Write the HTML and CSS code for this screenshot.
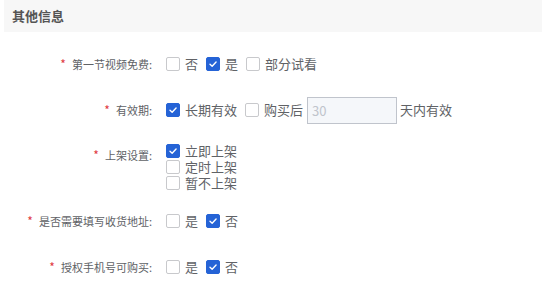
FILE: index.html
```html
<!DOCTYPE html>
<html lang="zh">
<head>
<meta charset="utf-8">
<link rel="stylesheet" href="styles.css">
</head>
<body>
<div class="page">
  <div class="section-head">其他信息</div>
  <form class="form">
    <div class="row r1">
      <label class="lbl"><span class="req">*</span>第一节视频免费:</label>
      <div class="ctl">
        <span class="opt"><span class="cb"></span><span class="txt">否</span></span>
        <span class="opt"><span class="cb on"><svg viewBox="0 0 14 14"><path d="M3.5 7.2 L6 9.6 L10.6 4.6" /></svg></span><span class="txt">是</span></span>
        <span class="opt"><span class="cb"></span><span class="txt">部分试看</span></span>
      </div>
    </div>
    <div class="row r2">
      <label class="lbl"><span class="req">*</span>有效期:</label>
      <div class="ctl">
        <span class="opt"><span class="cb on"><svg viewBox="0 0 14 14"><path d="M3.5 7.2 L6 9.6 L10.6 4.6" /></svg></span><span class="txt">长期有效</span></span>
        <span class="opt"><span class="cb"></span><span class="txt">购买后</span></span>
        <span class="inp">30</span>
        <span class="txt after">天内有效</span>
      </div>
    </div>
    <div class="row r3">
      <label class="lbl"><span class="req">*</span>上架设置:</label>
      <div class="ctl stack">
        <span class="opt"><span class="cb on"><svg viewBox="0 0 14 14"><path d="M3.5 7.2 L6 9.6 L10.6 4.6" /></svg></span><span class="txt">立即上架</span></span>
        <span class="opt"><span class="cb"></span><span class="txt">定时上架</span></span>
        <span class="opt"><span class="cb"></span><span class="txt">暂不上架</span></span>
      </div>
    </div>
    <div class="row r4">
      <label class="lbl"><span class="req">*</span>是否需要填写收货地址:</label>
      <div class="ctl">
        <span class="opt"><span class="cb"></span><span class="txt">是</span></span>
        <span class="opt"><span class="cb on"><svg viewBox="0 0 14 14"><path d="M3.5 7.2 L6 9.6 L10.6 4.6" /></svg></span><span class="txt">否</span></span>
      </div>
    </div>
    <div class="row r5">
      <label class="lbl"><span class="req">*</span>授权手机号可购买:</label>
      <div class="ctl">
        <span class="opt"><span class="cb"></span><span class="txt">是</span></span>
        <span class="opt"><span class="cb on"><svg viewBox="0 0 14 14"><path d="M3.5 7.2 L6 9.6 L10.6 4.6" /></svg></span><span class="txt">否</span></span>
      </div>
    </div>
  </form>
</div>
</body>
</html>
```
FILE: styles.css
```css
* { box-sizing: border-box; }
html, body { margin: 0; padding: 0; background: #fff; }
body {
  font-family: "Noto Sans CJK SC", "Noto Sans", sans-serif;
  color: #606266;
}
.page { padding-left: 4px; }
.section-head {
  height: 32px;
  line-height: 31px;
  background: #f7f7f7;
  padding-left: 8px;
  font-size: 13px;
  font-weight: bold;
  color: #555;
}
.form { display: flex; flex-direction: column; padding-top: 18px; }
.row { display: flex; align-items: flex-start; height: auto; }
.r1, .r2, .r4, .r5 { height: 28px; }
.r2 { margin-top: 18px; }
.r3 { margin-top: 17px; }
.r4 { margin-top: 16px; }
.r5 { margin-top: 18px; }
.lbl {
  width: 148px;
  height: 28px;
  flex: none;
  text-align: right;
  font-size: 11px;
  line-height: 28px;
  color: #606266;
  white-space: nowrap;
}
.req { color: #e03a3e; margin-right: 6px; font-size: 12px; line-height: 1; }
.ctl {
  margin-left: 14px;
  display: flex;
  align-items: center;
  height: 28px;
}
.ctl.stack {
  height: auto;
  flex-direction: column;
  align-items: flex-start;
  padding-top: 2px;
}
.stack .opt { height: 16px; margin-right: 0; }
.opt { display: flex; align-items: center; margin-right: 8px; }
.cb {
  width: 14px;
  height: 14px;
  border: 1px solid #c8c9cc;
  border-radius: 2px;
  background: #fff;
  flex: none;
  display: flex;
  align-items: center;
  justify-content: center;
}
.cb.on { background: #2563d6; border-color: #2563d6; }
.cb svg { width: 14px; height: 14px; }
.cb svg path { fill: none; stroke: #fff; stroke-width: 1.6; stroke-linecap: round; stroke-linejoin: round; }
.txt {
  font-size: 13px;
  line-height: 16px;
  margin-left: 5px;
  color: #606266;
  white-space: nowrap;
}
.inp {
  width: 90px;
  height: 27px;
  margin-left: -4px;
  border: 1px solid #c0c4cc;
  background: #f5f7fa;
  color: #c0c4cc;
  font-size: 13px;
  line-height: 25px;
  padding-left: 4px;
}
.txt.after { margin-left: 3px; }
```
